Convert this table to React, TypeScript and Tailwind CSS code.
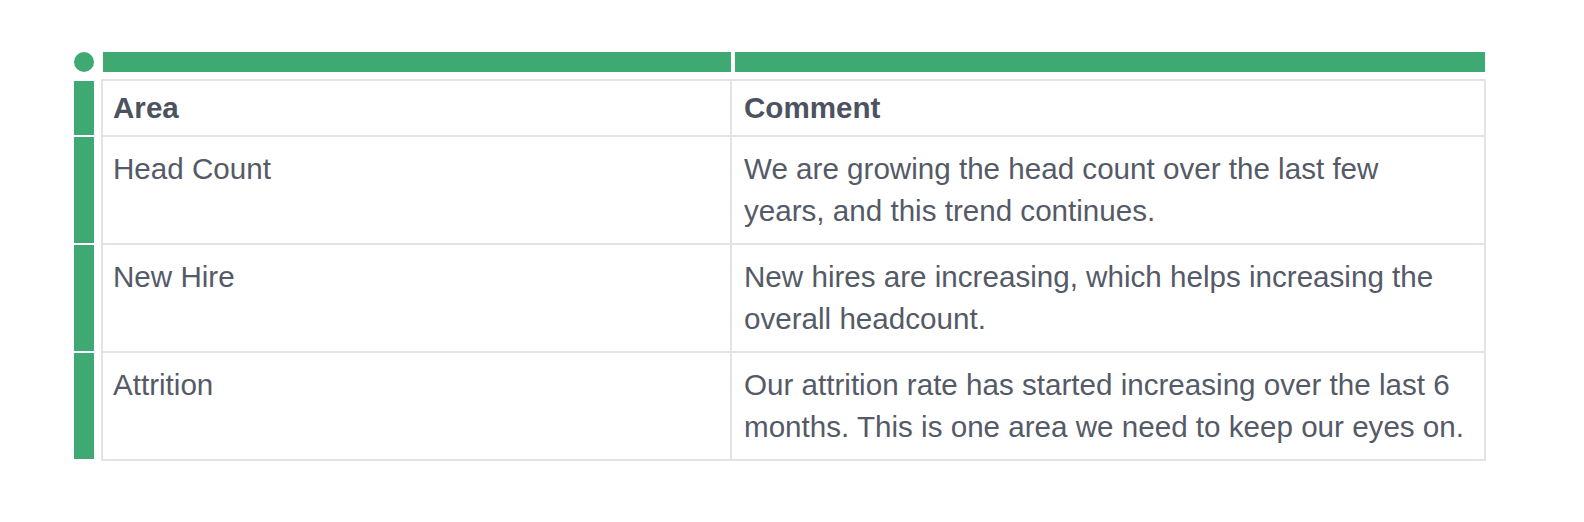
const rows = [
  {
    area: "Head Count",
    comment: "We are growing the head count over the last few years, and this trend continues.",
  },
  {
    area: "New Hire",
    comment: "New hires are increasing, which helps increasing the overall headcount.",
  },
  {
    area: "Attrition",
    comment: "Our attrition rate has started increasing over the last 6 months. This is one area we need to keep our eyes on.",
  },
];

const App = () => {
  return (
    <div
      className="min-h-[522px] bg-white pt-[52px] pl-[74px] text-[#555a67]"
      style={{ fontFamily: '"Liberation Sans", Arial, sans-serif' }}
    >
      {/* Column handles */}
      <div className="flex items-center">
        <div className="w-5 h-5 rounded-full bg-[#3fa973]" />
        <div className="ml-[9px] flex gap-[4px]">
          <div className="w-[628px] h-5 bg-[#3fa973]" />
          <div className="w-[750px] h-5 bg-[#3fa973]" />
        </div>
      </div>

      <div className="mt-[7px]">
        {/* Header row */}
        <div className="flex">
          <div className="w-5 mt-[2px] mb-[2px] bg-[#3fa973]" />
          <div className="ml-[7px] flex border-2 border-[#e2e2e7] text-[#4d5260]">
            <div className="w-[629px] border-r-2 border-[#e2e2e7] px-[10px] py-[11px] text-[29.6px] leading-[32px] font-bold">
              Area
            </div>
            <div className="w-[752px] pl-[12px] pr-[18px] py-[11px] text-[29.6px] leading-[32px] font-bold">
              Comment
            </div>
          </div>
        </div>

        {rows.map((row) => (
          <div key={row.area} className="flex">
            <div className="w-5 mb-[2px] bg-[#3fa973]" />
            <div className="ml-[7px] flex border-x-2 border-b-2 border-[#e2e2e7]">
              <div className="w-[629px] border-r-2 border-[#e2e2e7] px-[10px] py-[11px] text-[29.6px] leading-[42px]">
                {row.area}
              </div>
              <div className="w-[752px] pl-[12px] pr-[18px] py-[11px] text-[29.6px] leading-[42px]">
                {row.comment}
              </div>
            </div>
          </div>
        ))}
      </div>
    </div>
  );
};

export default App;
